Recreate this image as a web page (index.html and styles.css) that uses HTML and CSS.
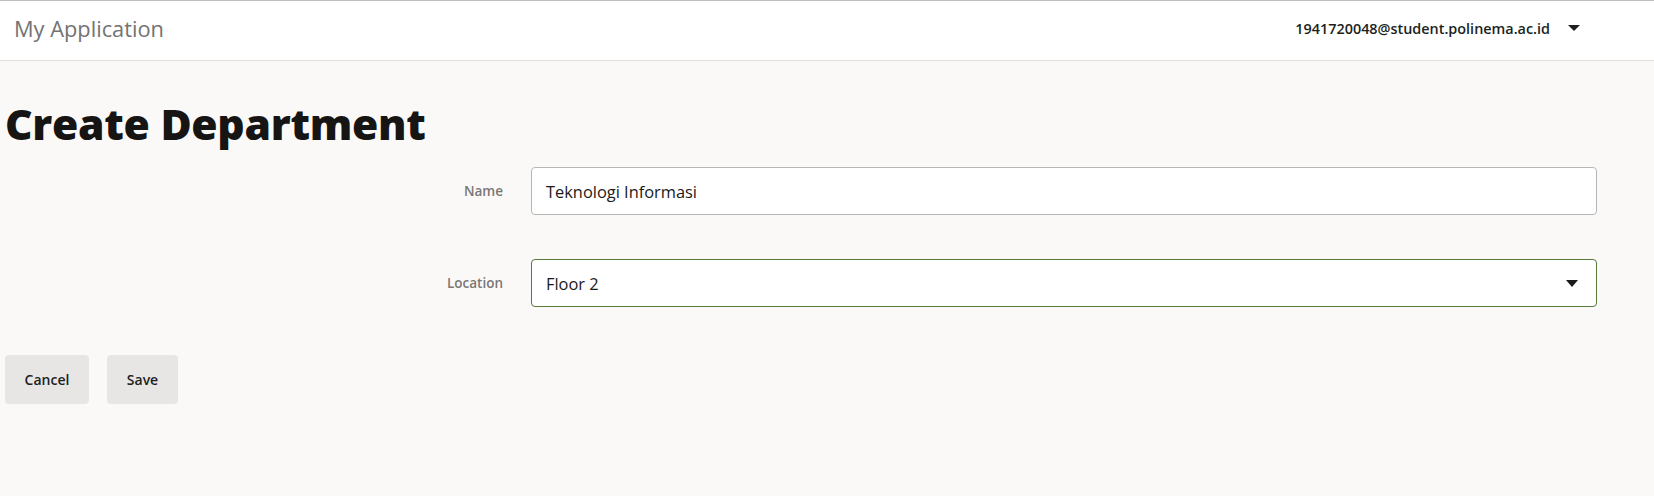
FILE: index.html
```html
<!DOCTYPE html>
<html>
<head>
<meta charset="utf-8">
<link rel="stylesheet" href="styles.css">
</head>
<body>
<header class="topbar">
  <div class="brand">My Application</div>
  <div class="user">
    <span class="user-email">1941720048@student.polinema.ac.id</span>
    <span class="caret"></span>
  </div>
</header>
<main class="page">
  <h1 class="title">Create Department</h1>
  <form class="form">
    <div class="field">
      <label class="label">Name</label>
      <div class="control">Teknologi Informasi</div>
    </div>
    <div class="field">
      <label class="label">Location</label>
      <div class="control select">Floor 2<span class="select-caret"></span></div>
    </div>
    <div class="actions">
      <button type="button" class="btn">Cancel</button>
      <button type="button" class="btn">Save</button>
    </div>
  </form>
</main>
</body>
</html>
```
FILE: styles.css
```css
* { box-sizing: border-box; }
html, body { margin: 0; padding: 0; }
body {
  background: #faf9f8;
  font-family: "Open Sans", "Noto Sans", sans-serif;
  color: #201f1e;
  height: 496px;
  overflow: hidden;
}
.topbar {
  height: 61px;
  background: #ffffff;
  border-top: 1px solid #bdbdbd;
  border-bottom: 1px solid #e1dfdd;
  display: flex;
  align-items: center;
  justify-content: space-between;
  padding: 0 0 5px 14px;
}
.brand {
  font-size: 21.8px;
  color: #737373;
}
.user {
  display: flex;
  align-items: center;
  gap: 18px;
  padding-right: 74px;
}
.user-email {
  font-size: 14.4px;
  font-weight: 600;
  color: #201f1e;
}
.caret {
  width: 0; height: 0;
  border-left: 6px solid transparent;
  border-right: 6px solid transparent;
  border-top: 6px solid #201f1e;
}
.page { padding: 0 0 0 5px; }
.title {
  margin: 34px 0 0 0;
  font-size: 42.6px;
  font-weight: 800;
  line-height: 56px;
  color: #161514;
  letter-spacing: -0.3px;
}
.form {
  margin-top: 16px;
  display: flex;
  flex-direction: column;
  gap: 44px;
}
.field {
  display: grid;
  grid-template-columns: 498px 1066px;
  column-gap: 28px;
  align-items: center;
}
.label {
  text-align: right;
  font-size: 13.5px;
  font-weight: 600;
  color: #7a7775;
}
.control {
  height: 48px;
  background: #ffffff;
  border: 1px solid #b8b6b4;
  border-radius: 4px;
  padding: 0 14px;
  display: flex;
  align-items: center;
  font-size: 16.4px;
  color: #1b1a19;
}
.select {
  border-color: #57793b;
  justify-content: space-between;
}
.select-caret {
  width: 0; height: 0;
  border-left: 6px solid transparent;
  border-right: 6px solid transparent;
  border-top: 7px solid #1b1a19;
  margin-right: 4px;
}
.actions {
  display: flex;
  gap: 18px;
  margin-top: 4px;
}
.btn {
  height: 49px;
  padding: 0 18px;
  background: #e8e6e5;
  border: none;
  border-radius: 4px;
  font-family: inherit;
  font-size: 14px;
  font-weight: 600;
  color: #201f1e;
}
.btn:first-child { width: 84px; }
.btn:last-child { width: 71px; }
```
